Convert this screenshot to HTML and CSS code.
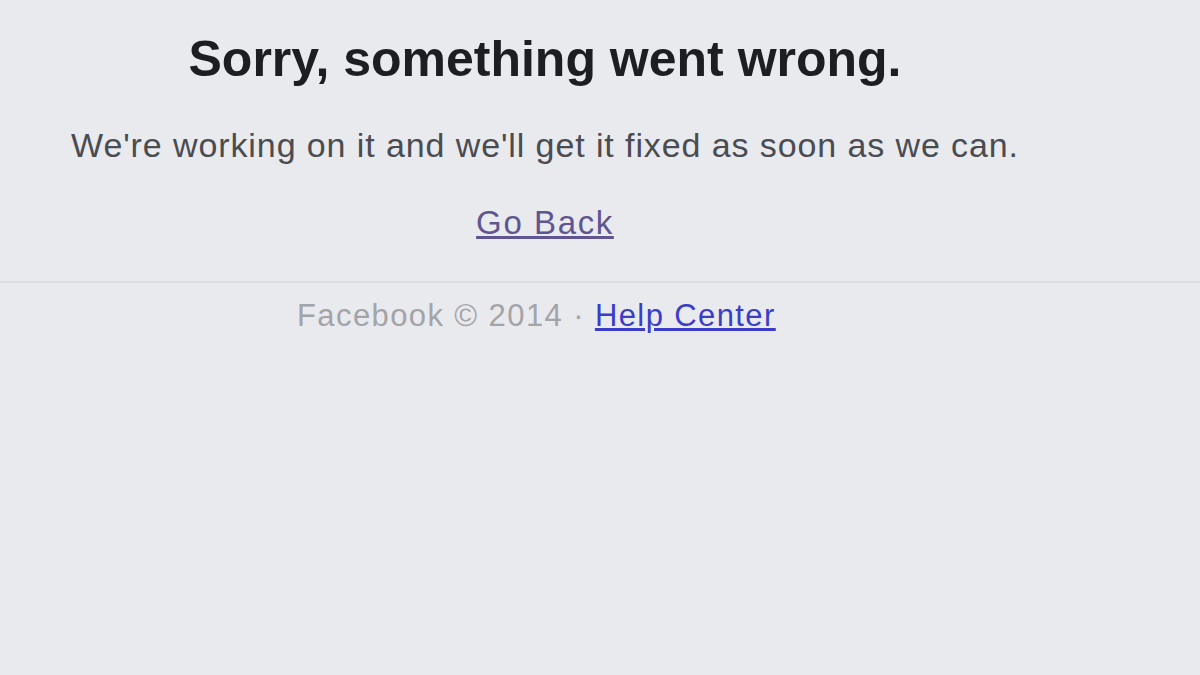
FILE: index.html
```html
<!DOCTYPE html>
<html lang="en">
<head>
    <meta charset="UTF-8">
    <meta name="viewport" content="width=device-width, initial-scale=1.0">
    <title>Sorry, something went wrong.</title>

    <link rel="stylesheet" href="styles.css">
</head>
<body>
    <div class="error-box">
        <h2 class="error-title">Sorry, something went wrong.</h2>
        <p class="error-text">We're working on it and we'll get it fixed as soon as we can.</p>
        <p class="error-back"><a href="#" class="visited-link">Go Back</a></p>
    </div>
    <div class="footer">
        <div class="footer-inner">
            <span class="footer-copy">Facebook &copy; 2014 &middot;</span>
            <a href="#" class="help-link">Help Center</a>
        </div>
    </div>
</body>
</html>
```

FILE: styles.css
```css
body {
    margin: 0;
    background-color: #e9eaee;
    font-family: "Liberation Sans", Arial, sans-serif;
    height: 675px;
    overflow: hidden;
}

.error-box {
    width: 1090px;
    text-align: center;
    padding-top: 30px;
    height: 250px;
    box-sizing: border-box;
}

.error-title {
    margin: 0;
    font-size: 50px;
    line-height: 58px;
    color: #1c1e22;
    font-weight: bold;
}

.error-text {
    margin: 37px 0 0;
    font-size: 34px;
    line-height: 40px;
    color: #4a4c51;
    letter-spacing: 0.9px;
}

.error-back {
    margin: 38px 0 0;
    font-size: 33px;
    line-height: 40px;
    letter-spacing: 1.6px;
}

.visited-link {
    color: #5f5590;
}

.footer {
    margin-top: 31px;
    border-top: 2px solid #dcdde1;
}

.footer-inner {
    padding: 15px 0 0 297px;
    font-size: 31px;
    line-height: 36px;
    letter-spacing: 1.4px;
}

.footer-copy {
    color: #a3a4a8;
}

.help-link {
    color: #3b3dc9;
}
```
